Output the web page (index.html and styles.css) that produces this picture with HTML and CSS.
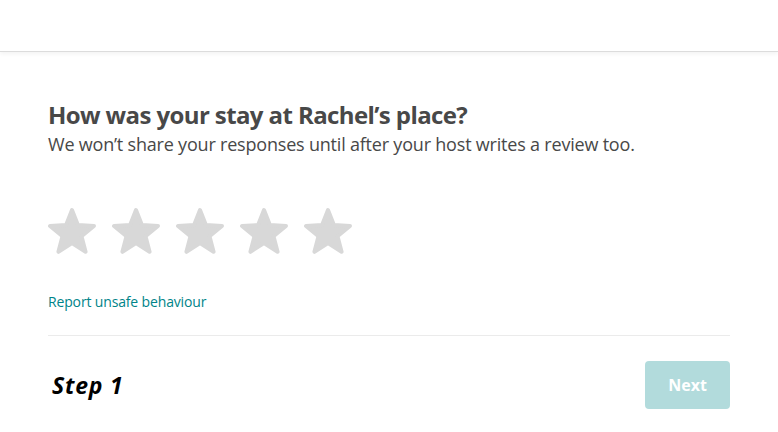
FILE: index.html
```html
<!DOCTYPE html>
<html>
<head>
<meta charset="utf-8">
<link rel="stylesheet" href="styles.css">
</head>
<body>
<header class="topbar"></header>
<main class="content">
  <h1 class="title">How was your stay at Rachel’s place?</h1>
  <p class="subtitle">We won’t share your responses until after your host writes a review too.</p>
  <div class="stars">
    <svg class="star" viewBox="0 0 48 48"><path d="M24 3 L29.88 18.01 L45.97 18.96 L33.51 29.19 L37.58 44.79 L24 36.1 L10.42 44.79 L14.49 29.19 L2.03 18.96 L18.12 18.01 Z"/></svg>
    <svg class="star" viewBox="0 0 48 48"><path d="M24 3 L29.88 18.01 L45.97 18.96 L33.51 29.19 L37.58 44.79 L24 36.1 L10.42 44.79 L14.49 29.19 L2.03 18.96 L18.12 18.01 Z"/></svg>
    <svg class="star" viewBox="0 0 48 48"><path d="M24 3 L29.88 18.01 L45.97 18.96 L33.51 29.19 L37.58 44.79 L24 36.1 L10.42 44.79 L14.49 29.19 L2.03 18.96 L18.12 18.01 Z"/></svg>
    <svg class="star" viewBox="0 0 48 48"><path d="M24 3 L29.88 18.01 L45.97 18.96 L33.51 29.19 L37.58 44.79 L24 36.1 L10.42 44.79 L14.49 29.19 L2.03 18.96 L18.12 18.01 Z"/></svg>
    <svg class="star" viewBox="0 0 48 48"><path d="M24 3 L29.88 18.01 L45.97 18.96 L33.51 29.19 L37.58 44.79 L24 36.1 L10.42 44.79 L14.49 29.19 L2.03 18.96 L18.12 18.01 Z"/></svg>
  </div>
  <a class="report" href="#">Report unsafe behaviour</a>
  <div class="footer">
    <span class="step">Step 1</span>
    <button class="next">Next</button>
  </div>
</main>
</body>
</html>
```
FILE: styles.css
```css
html, body {
  margin: 0;
  padding: 0;
  background: #fff;
  font-family: "Open Sans", "Liberation Sans", sans-serif;
}
.topbar {
  height: 51px;
  border-bottom: 1px solid #dcdcdc;
  box-shadow: 0 2px 4px rgba(0,0,0,0.05);
}
.content {
  width: 682px;
  margin-left: 48px;
  padding-top: 48px;
}
.title {
  margin: 0;
  font-size: 24px;
  font-weight: 700;
  color: #484848;
  line-height: 30px;
  letter-spacing: -0.6px;
}
.subtitle {
  margin: 2px 0 0;
  font-size: 18px;
  color: #484848;
  line-height: 24px;
  letter-spacing: -0.2px;
}
.stars {
  display: flex;
  gap: 16px;
  margin-top: 51px;
  height: 48px;
}
.star {
  width: 48px;
  height: 48px;
  display: block;
}
.star path {
  fill: #d8d8d8;
  stroke: #d8d8d8;
  stroke-width: 4;
  stroke-linejoin: round;
}
.report {
  display: block;
  margin-top: 38px;
  font-size: 14px;
  color: #008489;
  text-decoration: none;
  line-height: 18px;
  letter-spacing: -0.15px;
}
.footer {
  margin-top: 24px;
  border-top: 1px solid #ebebeb;
  display: flex;
  justify-content: space-between;
  align-items: center;
  padding-top: 25px;
}
.step {
  font-family: "Open Sans", sans-serif;
  font-style: italic;
  font-weight: 700;
  font-size: 23px;
  color: #000;
  margin-left: 4px;
  letter-spacing: 0.8px;
}
.next {
  width: 85px;
  height: 48px;
  border: none;
  border-radius: 4px;
  background: #b2dbdc;
  color: #fff;
  font-family: "Open Sans", sans-serif;
  font-weight: 700;
  font-size: 16px;
}
```
